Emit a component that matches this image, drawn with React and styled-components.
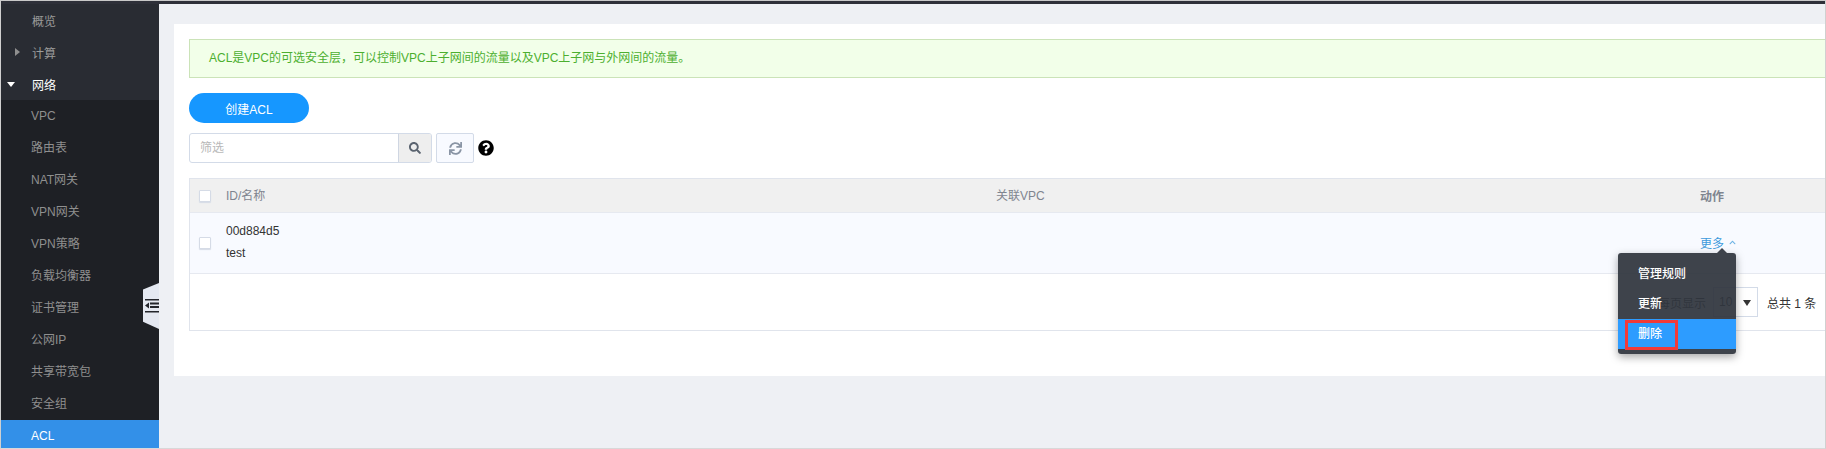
import React from 'react'
import styled, { createGlobalStyle } from 'styled-components'
import { FaSearch, FaSync, FaQuestionCircle, FaChevronUp } from 'react-icons/fa'

const GlobalStyle = createGlobalStyle`
    html, body {
        margin: 0;
        padding: 0;
        height: 449px;
        overflow: hidden;
        background: #eef0f4;
        font-family: "Liberation Sans", "Noto Sans CJK SC", sans-serif;
        font-size: 12px;
    }
    * {
        box-sizing: border-box;
    }
`

const NAV_TOP = [
    { label: '概览' },
    { label: '计算', arrow: 'right' },
    { label: '网络', arrow: 'down', open: true },
]
const NAV_SUB = ['VPC', '路由表', 'NAT网关', 'VPN网关', 'VPN策略', '负载均衡器', '证书管理', '公网IP', '共享带宽包', '安全组']

export default function App() {
    return (
        <>
            <GlobalStyle />
            <Frame>
                <TopStrip />
                <Body>
                    <Sidebar>
                        <NavTop>
                            {NAV_TOP.map((item) => (
                                <TopItem key={item.label} $open={item.open}>
                                    {item.arrow && <NavArrow $dir={item.arrow} />}
                                    {item.label}
                                </TopItem>
                            ))}
                        </NavTop>
                        <NavSub>
                            {NAV_SUB.map((label) => (
                                <SubItem key={label}>{label}</SubItem>
                            ))}
                            <SubItem $active>ACL</SubItem>
                        </NavSub>
                        <CollapseHandle>
                            <svg width="14" height="14" viewBox="0 0 14 14">
                                <path d="M0 0h14v1.500H0zM5 3.500h9v2H5zM5 7h9v2H5zM0 12h14v1.500H0zM4 3.500v6L0 6.500z" fill="#23252b" />
                            </svg>
                        </CollapseHandle>
                    </Sidebar>
                    <Main>
                        <Panel>
                            <Alert>ACL是VPC的可选安全层，可以控制VPC上子网间的流量以及VPC上子网与外网间的流量。</Alert>
                            <CreateButton>创建ACL</CreateButton>
                            <Toolbar>
                                <SearchBox>
                                    <SearchInput>筛选</SearchInput>
                                    <SearchButton>
                                        <FaSearch size={12} />
                                    </SearchButton>
                                </SearchBox>
                                <RefreshButton>
                                    <FaSync size={13} />
                                </RefreshButton>
                                <HelpIcon>
                                    <FaQuestionCircle size={16} />
                                </HelpIcon>
                            </Toolbar>
                            <Table>
                                <HeadRow>
                                    <CheckCell>
                                        <Checkbox />
                                    </CheckCell>
                                    <NameCell>ID/名称</NameCell>
                                    <VpcCell>关联VPC</VpcCell>
                                    <ActionCell $head>动作</ActionCell>
                                </HeadRow>
                                <DataRow>
                                    <CheckCell>
                                        <Checkbox />
                                    </CheckCell>
                                    <NameCell>
                                        <IdText>00d884d5</IdText>
                                        <IdText>test</IdText>
                                    </NameCell>
                                    <VpcCell />
                                    <ActionCell>
                                        <MoreLink>
                                            更多 <FaChevronUp size={7} />
                                        </MoreLink>
                                        <Menu>
                                            <MenuItem>管理规则</MenuItem>
                                            <MenuItem>更新</MenuItem>
                                            <MenuItem $active>
                                                <Highlight />
                                                删除
                                            </MenuItem>
                                        </Menu>
                                    </ActionCell>
                                </DataRow>
                                <Footer>
                                    <span>每页显示</span>
                                    <PageSelect>
                                        10
                                        <Caret />
                                    </PageSelect>
                                    <span>总共 1 条</span>
                                </Footer>
                            </Table>
                        </Panel>
                    </Main>
                </Body>
            </Frame>
        </>
    )
}

const Frame = styled.div`
    width: 1826px;
    height: 449px;
    display: flex;
    flex-direction: column;
    overflow: hidden;
    background: #eef0f4;
    border-top: 1px solid #c9c9c9;
    border-left: 1px solid #d0d0d0;
    border-right: 1px solid #d0d0d0;
    border-bottom: 1px solid #d8d8d8;
`

const TopStrip = styled.div`
    height: 3px;
    flex: none;
    background: #2e3039;
`

const Body = styled.div`
    flex: 1;
    display: flex;
    min-height: 0;
`

const Sidebar = styled.nav`
    position: relative;
    width: 158px;
    flex: none;
    display: flex;
    flex-direction: column;
    background: #1e2025;
`

const NavTop = styled.div`
    height: 96px;
    flex: none;
    background: #292c33;
`

const TopItem = styled.div`
    position: relative;
    height: 32px;
    padding-left: 31px;
    line-height: 36px;
    font-size: 12px;
    color: ${({ $open }) => ($open ? '#ffffff' : '#9a9a9a')};
`

const NavArrow = styled.i`
    position: absolute;
    top: ${({ $dir }) => ($dir === 'down' ? '14px' : '12px')};
    left: ${({ $dir }) => ($dir === 'down' ? '6px' : '14px')};
    width: 0;
    height: 0;
    border-style: solid;
    ${({ $dir }) =>
        $dir === 'down'
            ? 'border-width: 5px 4px 0 4px; border-color: #ffffff transparent transparent transparent;'
            : 'border-width: 4px 0 4px 5px; border-color: transparent transparent transparent #8f8f8f;'}
`

const NavSub = styled.div`
    display: flex;
    flex-direction: column;
`

const SubItem = styled.div`
    height: 32px;
    padding-left: 30px;
    line-height: 33px;
    font-size: 12px;
    color: ${({ $active }) => ($active ? '#ffffff' : '#8f8f8f')};
    background: ${({ $active }) => ($active ? '#3390e8' : 'transparent')};
`

const CollapseHandle = styled.div`
    position: absolute;
    top: 279px;
    right: 0;
    width: 16px;
    height: 46px;
    display: flex;
    align-items: center;
    justify-content: flex-end;
    background: #e4e8f1;
    clip-path: polygon(0 14%, 100% 0, 100% 100%, 0 84%);
`

const Main = styled.main`
    flex: 1;
    min-width: 0;
    padding: 20px 0 0 15px;
`

const Panel = styled.section`
    height: 352px;
    padding: 15px 0 0 15px;
    display: flex;
    flex-direction: column;
    align-items: flex-start;
    background: #ffffff;
`

const Alert = styled.div`
    width: 100%;
    height: 39px;
    flex: none;
    padding-left: 19px;
    line-height: 37px;
    font-size: 12px;
    color: #4caf2f;
    background: #f2ffe9;
    border: 1px solid #cbe3b8;
    border-right: 0;
`

const CreateButton = styled.button`
    width: 120px;
    height: 30px;
    flex: none;
    margin-top: 15px;
    padding: 0;
    font: inherit;
    color: #ffffff;
    background: #1697ff;
    border: 0;
    border-radius: 15px;
`

const Toolbar = styled.div`
    display: flex;
    align-items: center;
    margin-top: 10px;
`

const SearchBox = styled.div`
    width: 243px;
    height: 30px;
    display: flex;
    overflow: hidden;
    border: 1px solid #d3dbe8;
    border-radius: 3px;
`

const SearchInput = styled.div`
    flex: 1;
    padding-left: 10px;
    line-height: 29px;
    color: #b8b8b8;
`

const SearchButton = styled.div`
    width: 33px;
    display: flex;
    align-items: center;
    justify-content: center;
    color: #5b6470;
    background: #eeeeee;
    border-left: 1px solid #cfd6e2;
`

const RefreshButton = styled.div`
    width: 38px;
    height: 30px;
    margin-left: 4px;
    display: flex;
    align-items: center;
    justify-content: center;
    color: #8a95a5;
    background: #f8faff;
    border: 1px solid #d3dbe8;
    border-radius: 2px;
`

const HelpIcon = styled.div`
    margin-left: 4px;
    display: flex;
    color: #000000;
`

const Table = styled.div`
    width: 1700px;
    margin-top: 15px;
    flex: none;
    border: 1px solid #e0e4ec;
    border-right: 0;
`

const HeadRow = styled.div`
    height: 34px;
    display: flex;
    align-items: center;
    color: #7f858f;
    background: #f0f0f0;
    border-bottom: 1px solid #e6e9f0;
`

const DataRow = styled.div`
    height: 61px;
    display: flex;
    align-items: center;
    color: #333333;
    background: #f8faff;
    border-bottom: 1px solid #e6e9f0;
`

const CheckCell = styled.div`
    width: 36px;
    flex: none;
    padding-left: 9px;
`

const Checkbox = styled.div`
    width: 12px;
    height: 12px;
    background: #ffffff;
    border: 1px solid #d5dbe6;
    border-radius: 1px;
    box-shadow: 0 1px 1px #d5dbe6;
`

const NameCell = styled.div`
    width: 770px;
    flex: none;
    padding-bottom: 2px;
`

const IdText = styled.div`
    line-height: 22px;
`

const VpcCell = styled.div`
    width: 704px;
    flex: none;
    padding-bottom: 2px;
`

const ActionCell = styled.div`
    position: relative;
    flex: 1;
    align-self: stretch;
    display: flex;
    align-items: center;
    font-weight: ${({ $head }) => ($head ? 'bold' : 'normal')};
    padding-bottom: 1px;
`

const MoreLink = styled.span`
    display: flex;
    align-items: center;
    gap: 5px;
    color: #3d9bdc;

    svg {
        opacity: 0.75;
    }
`

const Menu = styled.div`
    position: absolute;
    top: 40px;
    left: -82px;
    z-index: 2;
    width: 118px;
    height: 101px;
    padding-top: 6px;
    background: rgba(46, 51, 60, 0.92);
    border-radius: 3px;
    box-shadow: 0 3px 8px rgba(0, 0, 0, 0.35);

    &::before {
        content: '';
        position: absolute;
        top: -5px;
        left: 99px;
        border-style: solid;
        border-width: 0 5px 5px 5px;
        border-color: transparent transparent #3e434b transparent;
    }
`

const MenuItem = styled.div`
    position: relative;
    height: 30px;
    padding-left: 20px;
    line-height: 30px;
    font-weight: 500;
    color: #ffffff;
    background: ${({ $active }) => ($active ? '#2d9cff' : 'transparent')};
`

const Highlight = styled.i`
    position: absolute;
    top: 1px;
    left: 7px;
    width: 53px;
    height: 30px;
    border: 3px solid #f23a3a;
`

const Footer = styled.div`
    height: 56px;
    padding-left: 1468px;
    display: flex;
    align-items: center;
    color: #333333;
    background: #ffffff;

    span:first-child {
        width: 55px;
        color: #555555;
    }
`

const PageSelect = styled.div`
    position: relative;
    width: 45px;
    height: 30px;
    margin-right: 9px;
    padding-left: 5px;
    line-height: 28px;
    color: #555555;
    border: 1px solid #d3dbe8;
`

const Caret = styled.i`
    position: absolute;
    top: 12px;
    right: 6px;
    border-style: solid;
    border-width: 6px 4px 0 4px;
    border-color: #333333 transparent transparent transparent;
`
